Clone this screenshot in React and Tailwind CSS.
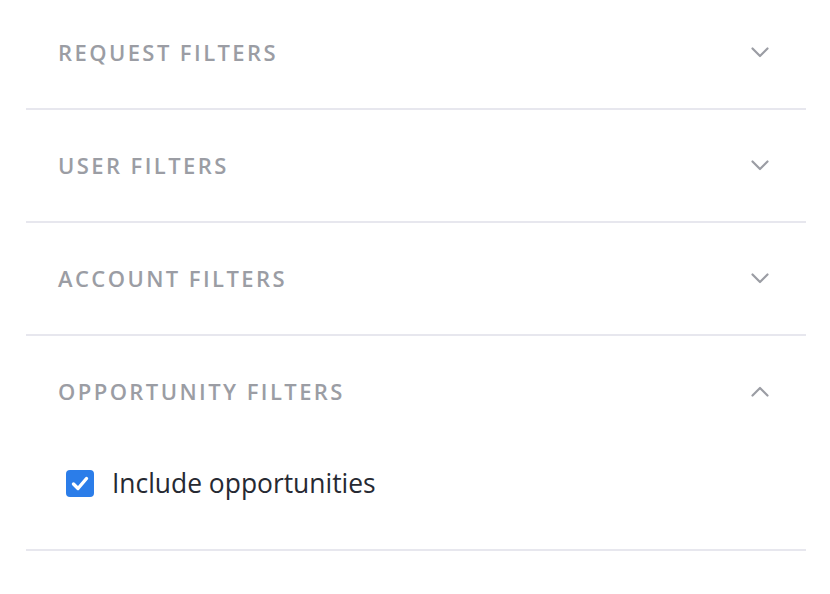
import React from "react";

function ChevronDown() {
  return (
    <svg width="18" height="11" viewBox="0 0 18 11" fill="none">
      <path d="M1.5 1.5 L9 9 L16.5 1.5" stroke="#9b9da4" strokeWidth="2.2" strokeLinecap="round" strokeLinejoin="round" />
    </svg>
  );
}

function ChevronUp() {
  return (
    <svg width="18" height="11" viewBox="0 0 18 11" fill="none">
      <path d="M1.5 9.5 L9 2 L16.5 9.5" stroke="#9b9da4" strokeWidth="2.2" strokeLinecap="round" strokeLinejoin="round" />
    </svg>
  );
}

function Header({ title, open }) {
  return (
    <div className="h-[111px] flex items-center justify-between pl-[32px] pr-[37px]">
      <span className="text-[22px] font-semibold tracking-[0.11em] text-[#9b9da4] uppercase leading-none -mt-[2px]">
        {title}
      </span>
      {open ? <ChevronUp /> : <ChevronDown />}
    </div>
  );
}

export default function App() {
  return (
    <div
      className="bg-white w-[830px] h-[594px] overflow-hidden"
      style={{ fontFamily: "'Open Sans', Lato, sans-serif" }}
    >
      <div className="ml-[26px] w-[780px] -mt-[3px]">
        <div className="border-b-2 border-[#e7e7ee]">
          <Header title="Request Filters" />
        </div>
        <div className="border-b-2 border-[#e7e7ee]">
          <Header title="User Filters" />
        </div>
        <div className="border-b-2 border-[#e7e7ee]">
          <Header title="Account Filters" />
        </div>
        <div className="border-b-2 border-[#e7e7ee]">
          <Header title="Opportunity Filters" open />
          <div className="pt-[23px] pb-[52px] pl-[40px]">
            <label className="flex items-center h-[27px] gap-[18px]">
              <span className="w-[28px] h-[27px] rounded-[4px] bg-[#2b7de9] flex items-center justify-center">
                <svg width="18" height="15" viewBox="0 0 18 15" fill="none">
                  <path d="M2.5 8 L7 12.5 L15.5 2.5" stroke="white" strokeWidth="3.4" strokeLinecap="round" strokeLinejoin="round" />
                </svg>
              </span>
              <span className="text-[26.4px] font-medium text-[#262932] leading-none -mt-[1px]">
                Include opportunities
              </span>
            </label>
          </div>
        </div>
      </div>
    </div>
  );
}
